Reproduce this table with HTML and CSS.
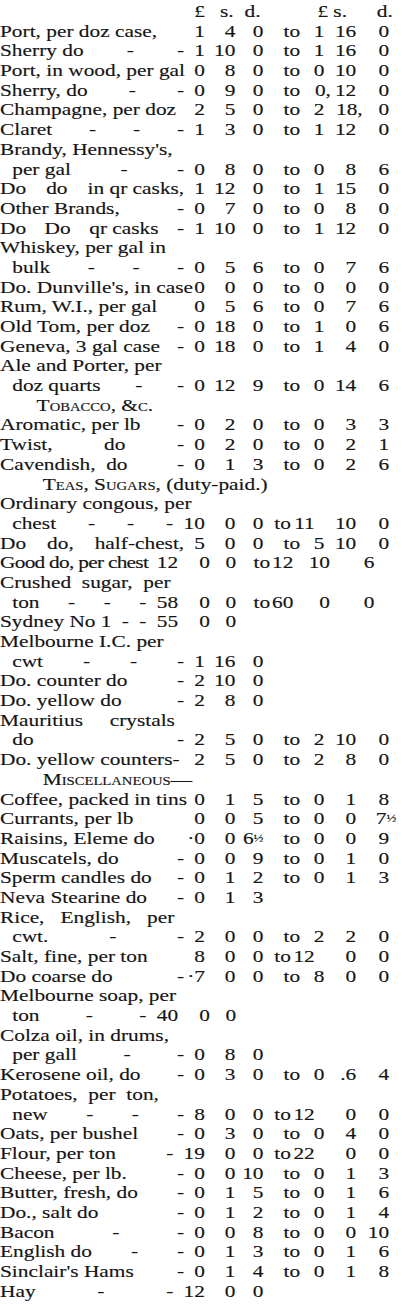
FILE: index.html
```html
<!DOCTYPE html>
<html lang="en">
<head>
<meta charset="utf-8">
<title>Prices Current</title>
<link rel="stylesheet" href="styles.css">
</head>
<body>
<main class="sheet">
<div class="row"><div class="lab"></div><span class="c l1">£</span><span class="c s1 ph1">s.</span><span class="c d1 ph2">d.</span><span class="c to"></span><span class="c l2"><span class="ng">£</span></span><span class="c s2 ph3">s.</span><span class="c d2"><span class="ng">d.</span></span></div>
<div class="row"><div class="lab"><span>Port, per doz case,</span></div><span class="c l1">1</span><span class="c s1">4</span><span class="c d1">0</span><span class="c to">to</span><span class="c l2">1</span><span class="c s2">16</span><span class="c d2">0</span></div>
<div class="row"><div class="lab"><span>Sherry do</span><span>-</span><span>-</span></div><span class="c l1">1</span><span class="c s1">10</span><span class="c d1">0</span><span class="c to">to</span><span class="c l2">1</span><span class="c s2">16</span><span class="c d2">0</span></div>
<div class="row"><div class="lab"><span>Port, in wood, per gal</span></div><span class="c l1">0</span><span class="c s1">8</span><span class="c d1">0</span><span class="c to">to</span><span class="c l2">0</span><span class="c s2">10</span><span class="c d2">0</span></div>
<div class="row"><div class="lab"><span>Sherry, do</span><span>-</span><span>-</span></div><span class="c l1">0</span><span class="c s1">9</span><span class="c d1">0</span><span class="c to">to</span><span class="c l2">0<span class="hang">,</span></span><span class="c s2">12</span><span class="c d2">0</span></div>
<div class="row"><div class="lab"><span>Champagne, per doz</span></div><span class="c l1">2</span><span class="c s1">5</span><span class="c d1">0</span><span class="c to">to</span><span class="c l2">2</span><span class="c s2">18<span class="hang">,</span></span><span class="c d2">0</span></div>
<div class="row"><div class="lab"><span>Claret</span><span>-</span><span>-</span><span>-</span></div><span class="c l1">1</span><span class="c s1">3</span><span class="c d1">0</span><span class="c to">to</span><span class="c l2">1</span><span class="c s2">12</span><span class="c d2">0</span></div>
<div class="row"><div class="txt">Brandy, Hennessy's,</div></div>
<div class="row"><div class="lab ind"><span>per gal</span><span>-</span><span>-</span></div><span class="c l1">0</span><span class="c s1">8</span><span class="c d1">0</span><span class="c to">to</span><span class="c l2">0</span><span class="c s2">8</span><span class="c d2">6</span></div>
<div class="row"><div class="lab"><span>Do</span><span>do</span><span>in qr casks,</span></div><span class="c l1">1</span><span class="c s1">12</span><span class="c d1">0</span><span class="c to">to</span><span class="c l2">1</span><span class="c s2">15</span><span class="c d2">0</span></div>
<div class="row"><div class="lab"><span>Other Brands,</span><span>-</span></div><span class="c l1">0</span><span class="c s1">7</span><span class="c d1">0</span><span class="c to">to</span><span class="c l2">0</span><span class="c s2">8</span><span class="c d2">0</span></div>
<div class="row"><div class="lab"><span>Do</span><span>Do</span><span>qr casks</span><span>-</span></div><span class="c l1">1</span><span class="c s1">10</span><span class="c d1">0</span><span class="c to">to</span><span class="c l2">1</span><span class="c s2">12</span><span class="c d2">0</span></div>
<div class="row"><div class="txt">Whiskey, per gal in</div></div>
<div class="row"><div class="lab ind"><span>bulk</span><span>-</span><span>-</span><span>-</span></div><span class="c l1">0</span><span class="c s1">5</span><span class="c d1">6</span><span class="c to">to</span><span class="c l2">0</span><span class="c s2">7</span><span class="c d2">6</span></div>
<div class="row"><div class="lab"><span>Do. Dunville's, in case</span></div><span class="c l1">0</span><span class="c s1">0</span><span class="c d1">0</span><span class="c to">to</span><span class="c l2">0</span><span class="c s2">0</span><span class="c d2">0</span></div>
<div class="row"><div class="lab"><span>Rum, W.I., per gal</span></div><span class="c l1">0</span><span class="c s1">5</span><span class="c d1">6</span><span class="c to">to</span><span class="c l2">0</span><span class="c s2">7</span><span class="c d2">6</span></div>
<div class="row"><div class="lab"><span>Old Tom, per doz</span><span>-</span></div><span class="c l1">0</span><span class="c s1">18</span><span class="c d1">0</span><span class="c to">to</span><span class="c l2">1</span><span class="c s2">0</span><span class="c d2">6</span></div>
<div class="row"><div class="lab"><span>Geneva, 3 gal case</span><span>-</span></div><span class="c l1">0</span><span class="c s1">18</span><span class="c d1">0</span><span class="c to">to</span><span class="c l2">1</span><span class="c s2">4</span><span class="c d2">0</span></div>
<div class="row"><div class="txt">Ale and Porter, per</div></div>
<div class="row"><div class="lab ind"><span>doz quarts</span><span>-</span><span>-</span></div><span class="c l1">0</span><span class="c s1">12</span><span class="c d1">9</span><span class="c to">to</span><span class="c l2">0</span><span class="c s2">14</span><span class="c d2">6</span></div>
<div class="row"><div class="hd hd-a sc">Tobacco, &amp;c.</div></div>
<div class="row"><div class="lab"><span>Aromatic, per lb</span><span>-</span></div><span class="c l1">0</span><span class="c s1">2</span><span class="c d1">0</span><span class="c to">to</span><span class="c l2">0</span><span class="c s2">3</span><span class="c d2">3</span></div>
<div class="row"><div class="lab"><span>Twist,</span><span>do</span><span>-</span></div><span class="c l1">0</span><span class="c s1">2</span><span class="c d1">0</span><span class="c to">to</span><span class="c l2">0</span><span class="c s2">2</span><span class="c d2">1</span></div>
<div class="row"><div class="lab"><span>Cavendish,  do</span><span>-</span></div><span class="c l1">0</span><span class="c s1">1</span><span class="c d1">3</span><span class="c to">to</span><span class="c l2">0</span><span class="c s2">2</span><span class="c d2">6</span></div>
<div class="row"><div class="hd hd-b"><span class="sc">Teas, Sugars,</span> (duty-paid.)</div></div>
<div class="row"><div class="txt">Ordinary congous, per</div></div>
<div class="row w2 t2"><div class="lab ind"><span>chest</span><span>-</span><span>-</span><span>-</span></div><span class="c l1">10</span><span class="c s1">0</span><span class="c d1">0</span><span class="c to">to</span><span class="c l2">11</span><span class="c s2">10</span><span class="c d2">0</span></div>
<div class="row"><div class="lab"><span>Do</span><span>do,</span><span>half-chest,</span></div><span class="c l1">5</span><span class="c s1">0</span><span class="c d1">0</span><span class="c to">to</span><span class="c l2">5</span><span class="c s2">10</span><span class="c d2">0</span></div>
<div class="row sh"><div class="lab"><span class="tight">Good do, per chest</span></div><span class="c l1">12</span><span class="c s1">0</span><span class="c d1">0</span><span class="c to">to</span><span class="c l2">12</span><span class="c s2">10</span><span class="c d2">6</span></div>
<div class="row"><div class="txt">Crushed  sugar,  per</div></div>
<div class="row sh"><div class="lab ind"><span>ton</span><span>-</span><span>-</span><span>-</span></div><span class="c l1">58</span><span class="c s1">0</span><span class="c d1">0</span><span class="c to">to</span><span class="c l2">60</span><span class="c s2">0</span><span class="c d2">0</span></div>
<div class="row sh"><div class="lab"><span>Sydney No 1</span><span>-</span><span>-</span></div><span class="c l1">55</span><span class="c s1">0</span><span class="c d1">0</span></div>
<div class="row"><div class="txt">Melbourne I.C. per</div></div>
<div class="row"><div class="lab ind"><span>cwt</span><span>-</span><span>-</span><span>-</span></div><span class="c l1">1</span><span class="c s1">16</span><span class="c d1">0</span></div>
<div class="row"><div class="lab"><span>Do. counter do</span><span>-</span></div><span class="c l1">2</span><span class="c s1">10</span><span class="c d1">0</span></div>
<div class="row"><div class="lab"><span>Do. yellow do</span><span>-</span></div><span class="c l1">2</span><span class="c s1">8</span><span class="c d1">0</span></div>
<div class="row"><div class="txt">Mauritius     crystals</div></div>
<div class="row"><div class="lab ind"><span>do</span><span>-</span></div><span class="c l1">2</span><span class="c s1">5</span><span class="c d1">0</span><span class="c to">to</span><span class="c l2">2</span><span class="c s2">10</span><span class="c d2">0</span></div>
<div class="row"><div class="lab"><span>Do. yellow counters-</span></div><span class="c l1">2</span><span class="c s1">5</span><span class="c d1">0</span><span class="c to">to</span><span class="c l2">2</span><span class="c s2">8</span><span class="c d2">0</span></div>
<div class="row"><div class="hd hd-b sc">Miscellaneous—</div></div>
<div class="row"><div class="lab"><span>Coffee, packed in tins</span></div><span class="c l1">0</span><span class="c s1">1</span><span class="c d1">5</span><span class="c to">to</span><span class="c l2">0</span><span class="c s2">1</span><span class="c d2">8</span></div>
<div class="row"><div class="lab"><span>Currants, per lb</span></div><span class="c l1">0</span><span class="c s1">0</span><span class="c d1">5</span><span class="c to">to</span><span class="c l2">0</span><span class="c s2">0</span><span class="c d2">7<span class="frac hang">½</span></span></div>
<div class="row"><div class="lab"><span>Raisins, Eleme do</span></div><span class="c l1">·0</span><span class="c s1">0</span><span class="c d1">6<span class="frac">½</span></span><span class="c to">to</span><span class="c l2">0</span><span class="c s2">0</span><span class="c d2">9</span></div>
<div class="row"><div class="lab"><span>Muscatels, do</span><span>-</span></div><span class="c l1">0</span><span class="c s1">0</span><span class="c d1">9</span><span class="c to">to</span><span class="c l2">0</span><span class="c s2">1</span><span class="c d2">0</span></div>
<div class="row"><div class="lab"><span>Sperm candles do</span><span>-</span></div><span class="c l1">0</span><span class="c s1">1</span><span class="c d1">2</span><span class="c to">to</span><span class="c l2">0</span><span class="c s2">1</span><span class="c d2">3</span></div>
<div class="row"><div class="lab"><span>Neva Stearine do</span><span>-</span></div><span class="c l1"><span class="low">0</span></span><span class="c s1">1</span><span class="c d1">3</span></div>
<div class="row"><div class="txt">Rice,   English,   per</div></div>
<div class="row"><div class="lab ind"><span>cwt.</span><span>-</span><span>-</span></div><span class="c l1">2</span><span class="c s1">0</span><span class="c d1">0</span><span class="c to">to</span><span class="c l2">2</span><span class="c s2">2</span><span class="c d2">0</span></div>
<div class="row t2"><div class="lab"><span>Salt, fine, per ton</span></div><span class="c l1">8</span><span class="c s1">0</span><span class="c d1">0</span><span class="c to">to</span><span class="c l2">12</span><span class="c s2">0</span><span class="c d2">0</span></div>
<div class="row"><div class="lab"><span>Do coarse do</span><span>-</span></div><span class="c l1">·7</span><span class="c s1">0</span><span class="c d1">0</span><span class="c to">to</span><span class="c l2">8</span><span class="c s2">0</span><span class="c d2">0</span></div>
<div class="row"><div class="txt">Melbourne soap, per</div></div>
<div class="row sh"><div class="lab ind"><span>ton</span><span>-</span><span>-</span></div><span class="c l1">40</span><span class="c s1">0</span><span class="c d1">0</span></div>
<div class="row"><div class="txt">Colza oil, in drums,</div></div>
<div class="row"><div class="lab ind"><span>per gall</span><span>-</span><span>-</span></div><span class="c l1">0</span><span class="c s1">8</span><span class="c d1">0</span></div>
<div class="row"><div class="lab"><span>Kerosene oil, do</span><span>-</span></div><span class="c l1">0</span><span class="c s1">3</span><span class="c d1">0</span><span class="c to">to</span><span class="c l2">0</span><span class="c s2">.6</span><span class="c d2">4</span></div>
<div class="row"><div class="txt">Potatoes,  per  ton,</div></div>
<div class="row t2"><div class="lab ind"><span>new</span><span>-</span><span>-</span><span>-</span></div><span class="c l1">8</span><span class="c s1">0</span><span class="c d1">0</span><span class="c to">to</span><span class="c l2">12</span><span class="c s2">0</span><span class="c d2">0</span></div>
<div class="row"><div class="lab"><span>Oats, per bushel</span><span>-</span></div><span class="c l1">0</span><span class="c s1">3</span><span class="c d1">0</span><span class="c to">to</span><span class="c l2">0</span><span class="c s2">4</span><span class="c d2">0</span></div>
<div class="row w2 t2"><div class="lab"><span>Flour, per ton</span><span>-</span></div><span class="c l1">19</span><span class="c s1">0</span><span class="c d1">0</span><span class="c to">to</span><span class="c l2">22</span><span class="c s2">0</span><span class="c d2">0</span></div>
<div class="row"><div class="lab"><span>Cheese, per lb.</span><span>-</span></div><span class="c l1">0</span><span class="c s1">0</span><span class="c d1">10</span><span class="c to">to</span><span class="c l2">0</span><span class="c s2">1</span><span class="c d2">3</span></div>
<div class="row"><div class="lab"><span>Butter, fresh, do</span><span>-</span></div><span class="c l1">0</span><span class="c s1">1</span><span class="c d1">5</span><span class="c to">to</span><span class="c l2">0</span><span class="c s2">1</span><span class="c d2">6</span></div>
<div class="row"><div class="lab"><span>Do., salt do</span><span>-</span></div><span class="c l1">0</span><span class="c s1">1</span><span class="c d1">2</span><span class="c to">to</span><span class="c l2">0</span><span class="c s2">1</span><span class="c d2">4</span></div>
<div class="row"><div class="lab"><span>Bacon</span><span>-</span><span>-</span></div><span class="c l1">0</span><span class="c s1">0</span><span class="c d1">8</span><span class="c to">to</span><span class="c l2">0</span><span class="c s2">0</span><span class="c d2">10</span></div>
<div class="row"><div class="lab"><span>English do</span><span>-</span><span>-</span></div><span class="c l1">0</span><span class="c s1">1</span><span class="c d1">3</span><span class="c to">to</span><span class="c l2">0</span><span class="c s2">1</span><span class="c d2">6</span></div>
<div class="row"><div class="lab"><span>Sinclair's Hams</span><span>-</span></div><span class="c l1">0</span><span class="c s1">1</span><span class="c d1">4</span><span class="c to">to</span><span class="c l2">0</span><span class="c s2">1</span><span class="c d2">8</span></div>
<div class="row w2"><div class="lab"><span>Hay</span><span>-</span><span>-</span></div><span class="c l1">12</span><span class="c s1">0</span><span class="c d1">0</span></div>
</main>
</body>
</html>
```
FILE: styles.css
```css
* { box-sizing: border-box; }
html, body { margin: 0; padding: 0; background: #ffffff; }
body { width: 402px; overflow: hidden; }

.sheet {
  display: block;
  width: 329.5px;
  padding-top: 2px;
  transform: scaleX(1.22);
  transform-origin: 0 0;
  font-family: "Liberation Serif", "Times New Roman", serif;
  font-size: 17.5px;
  line-height: 19.7px;
  color: #141414;
  -webkit-text-stroke: 0.15px #141414;
}

.row { display: flex; height: 19.7px; white-space: pre; }

.lab {
  flex: none;
  width: 159px;
  display: flex;
  justify-content: space-between;
}
.lab > span { flex: none; }
.lab > span:last-child { margin-right: 8px; }
.lab.ind { padding-left: 10px; }
.tight { letter-spacing: -0.6px; }

.txt { flex: none; }
.hd { flex: none; }
.hd-a { padding-left: 30px; }
.hd-b { padding-left: 35px; }
.sc { font-variant: small-caps; }

.c { flex: none; display: flex; justify-content: flex-end; }
.l1 { width: 9px; }
.s1 { width: 25px; }
.d1 { width: 23px; }
.to { width: 30px; }
.l2 { width: 20px; }
.s2 { width: 26px; }
.d2 { width: 27px; }

/* two-figure pounds in the first column */
.w2 .lab { width: 150px; }
.w2 .l1 { width: 18px; }

/* rows set further left by the compositor */
.sh .lab { width: 128px; }
.sh .l1 { width: 18px; }
.sh .s1 { width: 26px; }
.sh .d1 { width: 21.5px; }
.sh .to { width: 28px; }
.sh .l2 { width: 19px; }
.sh .s2 { width: 30px; }
.sh .d2 { width: 36.5px; }

/* "to" followed by two figures */
.t2 .to { width: 22.5px; }
.t2 .l2 { width: 19.5px; }
.t2 .s2 { width: 34px; }

/* header column labels */
.ph1 { padding-right: 1.5px; }
.ph2 { padding-right: 2.5px; }
.ph3 { padding-right: 7.6px; }
.ng { margin-right: -3px; }

.hang { margin-right: -0.3em; }
.frac { font-size: 0.62em; vertical-align: 0.25em; }
.frac.hang { margin-right: -0.55em; }
.low { vertical-align: -3px; }
```
